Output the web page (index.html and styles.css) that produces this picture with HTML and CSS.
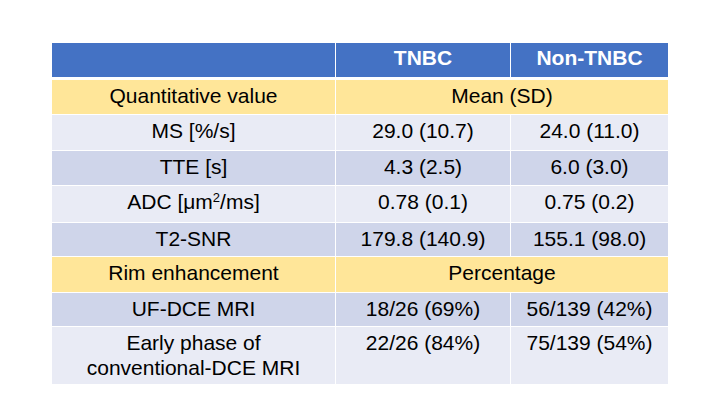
FILE: index.html
```html
<!DOCTYPE html>
<html lang="en">
<head>
<meta charset="utf-8">
<title>TNBC vs Non-TNBC</title>
<link rel="stylesheet" href="styles.css">
</head>
<body>
<div class="page">
  <div class="grid">
    <div class="cell head"></div>
    <div class="cell head">TNBC</div>
    <div class="cell head">Non-TNBC</div>

    <div class="cell sect">Quantitative value</div>
    <div class="cell sect span">Mean (SD)</div>

    <div class="cell light">MS [%/s]</div>
    <div class="cell light">29.0 (10.7)</div>
    <div class="cell light">24.0 (11.0)</div>

    <div class="cell dark">TTE [s]</div>
    <div class="cell dark">4.3 (2.5)</div>
    <div class="cell dark">6.0 (3.0)</div>

    <div class="cell light">ADC [μm<sup>2</sup>/ms]</div>
    <div class="cell light">0.78 (0.1)</div>
    <div class="cell light">0.75 (0.2)</div>

    <div class="cell dark">T2-SNR</div>
    <div class="cell dark">179.8 (140.9)</div>
    <div class="cell dark">155.1 (98.0)</div>

    <div class="cell sect">Rim enhancement</div>
    <div class="cell sect span">Percentage</div>

    <div class="cell dark">UF-DCE MRI</div>
    <div class="cell dark">18/26 (69%)</div>
    <div class="cell dark">56/139 (42%)</div>

    <div class="cell light">Early phase of<br>conventional-DCE MRI</div>
    <div class="cell light">22/26 (84%)</div>
    <div class="cell light">75/139 (54%)</div>
  </div>
</div>
</body>
</html>
```

FILE: styles.css
```css
html, body {
  margin: 0;
  padding: 0;
  background: #ffffff;
}

.page {
  width: 720px;
  height: 405px;
  padding: 43px 0 0 52px;
  box-sizing: border-box;
  font-family: "Liberation Sans", Arial, sans-serif;
  font-size: 21px;
  color: #000000;
}

.grid {
  display: grid;
  grid-template-columns: 283px 174px 157px;
  grid-template-rows: 36px 34px 35px 34px 36px 33px 35px 33px 57px;
  column-gap: 1px;
  row-gap: 1px;
  width: 616px;
  background: #ffffff;
}

.cell {
  text-align: center;
  line-height: 25px;
  padding-top: 3px;
  box-sizing: border-box;
  white-space: nowrap;
}

.head {
  background: #4472c4;
  color: #ffffff;
  font-weight: bold;
  margin-bottom: 2px;
  padding-top: 2px;
}

.sect {
  background: #ffe699;
}

.span {
  grid-column: span 2;
}

.light {
  background: #e9ebf5;
}

.dark {
  background: #cfd5ea;
}

sup {
  font-size: 13px;
  line-height: 0;
  vertical-align: 7px;
}
```
